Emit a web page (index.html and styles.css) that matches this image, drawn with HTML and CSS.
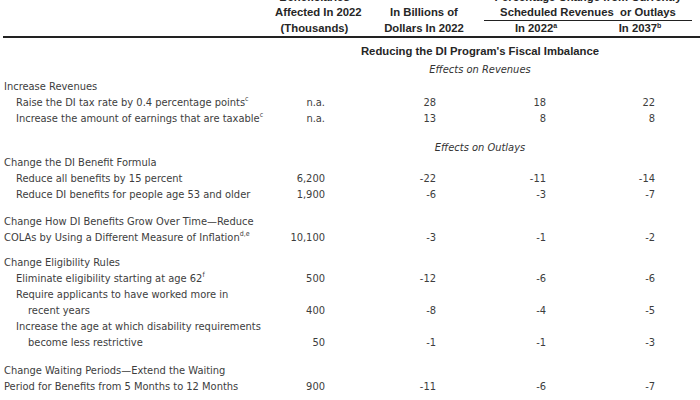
FILE: index.html
```html
<!DOCTYPE html>
<html>
<head>
<meta charset="utf-8">
<link rel="stylesheet" href="styles.css">
</head>
<body>
<div class="page">
  <div class="head">
    <div class="h-spacer"></div>
    <div class="h-col h-benef">
      <div class="h-first">Beneficiaries</div>
      <div>Affected In 2022</div>
      <div>(Thousands)</div>
    </div>
    <div class="h-col h-bill">
      <div class="h-first">&nbsp;</div>
      <div>In Billions of</div>
      <div>Dollars In 2022</div>
    </div>
    <div class="h-pct">
      <div class="h-first">Percentage Change from Currently</div>
      <div class="h-pct-mid">Scheduled Revenues&nbsp; or Outlays</div>
      <div class="h-pct-sub"><span>In 2022<sup>a</sup></span><span>In 2037<sup>b</sup></span></div>
    </div>
  </div>

  <div class="section-title">Reducing the DI Program's Fiscal Imbalance</div>
  <div class="effects effects-rev">Effects on Revenues</div>

  <div class="group g1">
    <div class="row"><div class="label heading">Increase Revenues</div></div>
    <div class="row"><div class="label item">Raise the DI tax rate by 0.4 percentage points<sup>c</sup></div><div class="num">n.a.</div><div class="num">28</div><div class="num">18</div><div class="num">22</div></div>
    <div class="row"><div class="label item">Increase the amount of earnings that are taxable<sup>c</sup></div><div class="num">n.a.</div><div class="num">13</div><div class="num">8</div><div class="num">8</div></div>
  </div>

  <div class="effects effects-out">Effects on Outlays</div>

  <div class="group g2">
    <div class="row"><div class="label heading">Change the DI Benefit Formula</div></div>
    <div class="row"><div class="label item">Reduce all benefits by 15 percent</div><div class="num">6,200</div><div class="num">-22</div><div class="num">-11</div><div class="num">-14</div></div>
    <div class="row"><div class="label item">Reduce DI benefits for people age 53 and older</div><div class="num">1,900</div><div class="num">-6</div><div class="num">-3</div><div class="num">-7</div></div>
  </div>

  <div class="group g3">
    <div class="row"><div class="label heading">Change How DI Benefits Grow Over Time—Reduce<br>COLAs by Using a Different Measure of Inflation<sup>d,e</sup></div><div class="num">10,100</div><div class="num">-3</div><div class="num">-1</div><div class="num">-2</div></div>
  </div>

  <div class="group g4">
    <div class="row"><div class="label heading">Change Eligibility Rules</div></div>
    <div class="row"><div class="label item">Eliminate eligibility starting at age 62<sup>f</sup></div><div class="num">500</div><div class="num">-12</div><div class="num">-6</div><div class="num">-6</div></div>
    <div class="row"><div class="label item">Require applicants to have worked more in<br>recent years</div><div class="num">400</div><div class="num">-8</div><div class="num">-4</div><div class="num">-5</div></div>
    <div class="row"><div class="label item">Increase the age at which disability requirements<br>become less restrictive</div><div class="num">50</div><div class="num">-1</div><div class="num">-1</div><div class="num">-3</div></div>
  </div>

  <div class="group g5">
    <div class="row"><div class="label heading">Change Waiting Periods—Extend the Waiting<br>Period for Benefits from 5 Months to 12 Months</div><div class="num">900</div><div class="num">-11</div><div class="num">-6</div><div class="num">-7</div></div>
  </div>
</div>
</body>
</html>
```

FILE: styles.css
```css
html {
  margin: 0;
  padding: 0;
  background: #fff;
  overflow: hidden;
}

body {
  margin: 0;
  padding: 0;
}

.page {
  display: flow-root;
  width: 700px;
  padding-left: 4px;
  box-sizing: border-box;
  font-family: "DejaVu Sans Condensed", "DejaVu Sans", sans-serif;
  font-stretch: condensed;
  font-size: 11px;
  line-height: 16px;
  color: #3d3d3d;
}

sup {
  font-size: 7px;
  line-height: 0;
  vertical-align: 5px;
}

/* ---------- header ---------- */
.head {
  display: grid;
  grid-template-columns: 271px 80px 130px 208px;
  margin-top: -10px;
  margin-left: -1px;
  border-bottom: 2px solid #222;
  font-family: "Liberation Sans", Arial, sans-serif;
  font-stretch: normal;
  font-weight: bold;
  font-size: 11.3px;
  color: #262626;
}

.h-first {
  height: 14px;
  line-height: 14px;
}

.h-col {
  text-align: center;
  white-space: nowrap;
}

.h-benef { padding-left: 1px; }

.h-bill { padding-left: 10px; }

.h-pct {
  text-align: center;
  white-space: nowrap;
}

.h-pct-mid {
  height: 17px;
  box-sizing: border-box;
  border-bottom: 1px solid #222;
  line-height: 16px;
}

.h-pct-sub {
  display: grid;
  grid-template-columns: 1fr 1fr;
  line-height: 15px;
}

.h-pct-sub sup { vertical-align: 4px; }

/* ---------- sections ---------- */
.section-title {
  margin-top: 5px;
  margin-left: 256px;
  text-align: center;
  font-family: "Liberation Sans", Arial, sans-serif;
  font-stretch: normal;
  font-weight: bold;
  font-size: 11.3px;
  color: #262626;
}

.effects {
  margin-left: 256px;
  text-align: center;
  font-style: italic;
  color: #333;
}

.effects-rev { margin-top: 3px; }
.effects-out { margin-top: 13px; }

.g1 { margin-top: 1px; }
.g2 { margin-top: -1px; }
.g3 { margin-top: 11px; }
.g4 { margin-top: 9px; }
.g5 { margin-top: 12px; }

.row {
  display: grid;
  grid-template-columns: 261px 60px 111px 110px 109px;
  align-items: end;
}

.label {
  white-space: nowrap;
}

.item {
  padding-left: 24px;
  text-indent: -12px;
}

.num {
  text-align: right;
  white-space: nowrap;
}
```
